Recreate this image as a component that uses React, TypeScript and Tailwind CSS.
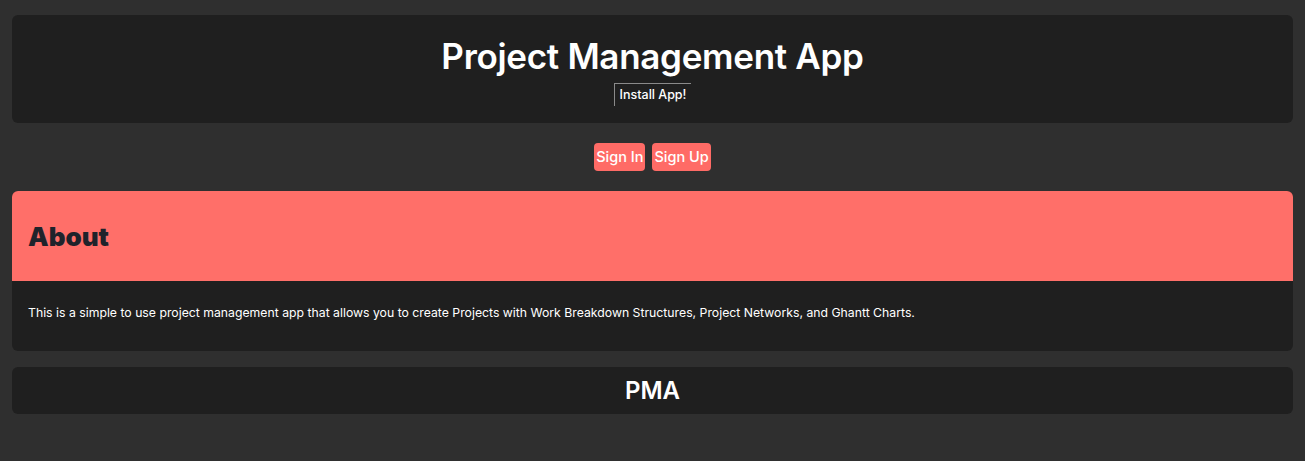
export default function App() {
  return (
    <div className="min-h-screen bg-[#2f2f2f] px-3 pt-[15px] pb-12 text-white" style={{ fontFamily: 'Inter, "Noto Sans", sans-serif' }}>
      {/* Header */}
      <header className="flex h-[108px] flex-col items-center rounded-md bg-[#1f1f1f] pt-[21px]">
        <h1 className="text-[35px] font-semibold leading-[40px] tracking-[-0.3px]">Project Management App</h1>
        <button className="mt-[7px] h-[23px] border-t border-l border-t-[#8a8a8a] border-l-[#8a8a8a] bg-[#1f1f1f] px-[5px] text-[12.5px] font-medium leading-[20px] text-white">
          Install App!
        </button>
      </header>

      {/* Auth */}
      <div className="flex justify-center gap-[7px] py-[20px]">
        <button className="h-[28px] rounded-[4px] bg-[#ff6b66] px-[2px] text-[14.5px] font-medium leading-[28px] text-white">Sign In</button>
        <button className="h-[28px] rounded-[4px] bg-[#ff6b66] px-[2px] text-[14.5px] font-medium leading-[28px] text-white">Sign Up</button>
      </div>

      {/* About */}
      <section className="overflow-hidden rounded-md bg-[#1f1f1f]">
        <div className="flex h-[90px] items-center bg-[#ff6f69] px-4">
          <h2 className="text-[26px] font-black text-[#1f232b]">About</h2>
        </div>
        <p className="px-4 pt-[24px] pb-[30px] text-[12.25px] leading-[16px] text-white">
          This is a simple to use project management app that allows you to create Projects with Work Breakdown Structures, Project Networks, and Ghantt Charts.
        </p>
      </section>

      {/* Footer */}
      <footer className="mt-4 flex h-[47px] items-center justify-center rounded-md bg-[#1f1f1f]">
        <h2 className="text-[24px] font-semibold">PMA</h2>
      </footer>
    </div>
  );
}
